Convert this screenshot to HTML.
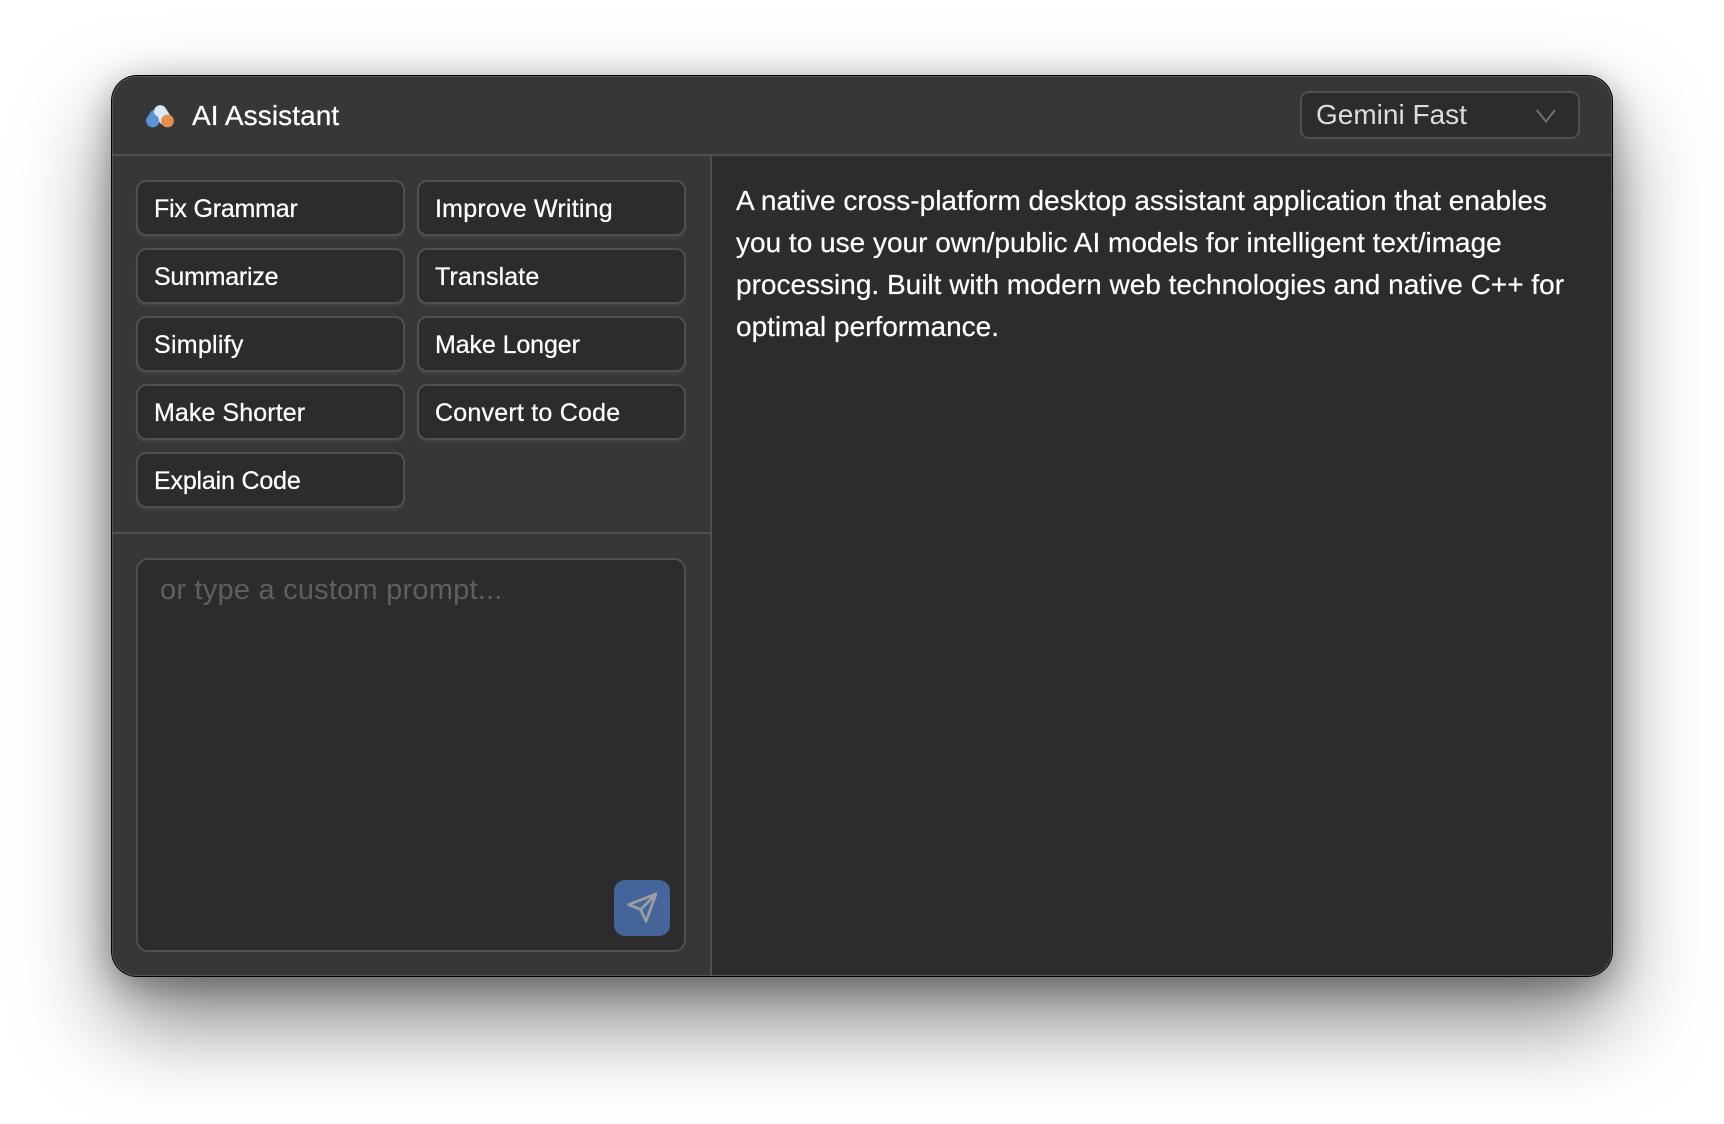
<!DOCTYPE html>
<html lang="en"><head><meta charset="utf-8"><title>AI Assistant</title>
<style>
*{box-sizing:border-box;margin:0;padding:0}
html,body{width:1724px;height:1124px;background:#fff;overflow:hidden;font-family:"Liberation Sans",sans-serif}
.win{position:absolute;left:112px;top:76px;width:1500px;height:900px;border-radius:25px;background:#373737;box-shadow:0 0 0 1px #000,inset 0 0 0 1px #565656,0 44px 90px rgba(0,0,0,.5),0 8px 34px rgba(0,0,0,.32)}
.a{position:absolute}
.hl{height:2px;background:#4f4f4f}
.vl{width:2px;background:#4f4f4f}
.btn{position:absolute;width:269px;height:56px;background:#2c2c2c;border:2px solid #505050;border-radius:10px;box-shadow:0 3px 2px rgba(70,70,70,.6);color:#fff;font-size:25px;line-height:55px;padding-left:16px;white-space:nowrap;-webkit-text-stroke:.25px #fff}
.t{position:absolute;white-space:nowrap}
</style></head><body>
<div class="win"></div>
<div class="a" style="left:712px;top:157px;width:899px;height:818px;background:#2c2c2c;border-bottom-right-radius:24px"></div>
<div class="a hl" style="left:113px;top:154px;width:1498px"></div>
<div class="a vl" style="left:710px;top:156px;height:819px"></div>
<div class="a hl" style="left:113px;top:532px;width:597px"></div>

<svg class="a" style="left:140px;top:98px" width="40" height="36" viewBox="140 98 40 36">
<line x1="152.7" y1="120.8" x2="155.8" y2="116" stroke="#5b94d3" stroke-width="13" stroke-linecap="round"/>
<line x1="160.3" y1="111.5" x2="165" y2="119" stroke="#d9e8f5" stroke-width="12.6" stroke-linecap="round"/>
<circle cx="152.7" cy="120.8" r="6.4" fill="#5b94d3"/>
<circle cx="167.5" cy="121" r="6.4" fill="#e58f4e"/>
</svg>
<div class="t" style="left:192px;top:98px;font-size:28px;line-height:36px;color:#fff;letter-spacing:.08px;-webkit-text-stroke:.25px #fff">AI Assistant</div>

<div class="a" style="left:1300px;top:91px;width:280px;height:48px;background:#2c2c2c;border:2px solid #505050;border-radius:9px"></div>
<div class="t" style="left:1316px;top:97px;font-size:28px;line-height:36px;color:#dcdcdc">Gemini Fast</div>
<svg class="a" style="left:1530px;top:100px" width="40" height="30" viewBox="1530 100 40 30"><path d="M1536.7 110L1546 121.5L1555 110" fill="none" stroke="#6f6f6f" stroke-width="2"/></svg>

<div class="btn" style="left:136px;top:180px;letter-spacing:-.2px">Fix Grammar</div>
<div class="btn" style="left:417px;top:180px;letter-spacing:.22px">Improve Writing</div>
<div class="btn" style="left:136px;top:248px;letter-spacing:-.24px">Summarize</div>
<div class="btn" style="left:417px;top:248px;letter-spacing:.12px">Translate</div>
<div class="btn" style="left:136px;top:316px;letter-spacing:.27px">Simplify</div>
<div class="btn" style="left:417px;top:316px;letter-spacing:-.1px">Make Longer</div>
<div class="btn" style="left:136px;top:384px;letter-spacing:.09px">Make Shorter</div>
<div class="btn" style="left:417px;top:384px;letter-spacing:.22px">Convert to Code</div>
<div class="btn" style="left:136px;top:452px;letter-spacing:-.18px">Explain Code</div>

<div class="a" style="left:136px;top:558px;width:550px;height:394px;background:#2c2c2c;border:2px solid #505050;border-radius:12px"></div>
<div class="t" style="left:160px;top:572px;font-size:29px;line-height:36px;color:#5f5f5f;letter-spacing:.22px">or type a custom prompt...</div>
<div class="a" style="left:614px;top:880px;width:56px;height:56px;background:#44659a;border-radius:11px"></div>
<svg class="a" style="left:620px;top:884px" width="46" height="46" viewBox="620 884 46 46"><path d="M656 894L628.5 904.7L640.7 909.5L646 921.3ZM656 894L640.7 909.5" fill="none" stroke="#9c9c9c" stroke-width="2.8" stroke-linejoin="round" stroke-linecap="round"/></svg>

<div class="t" style="left:736px;top:180px;font-size:28px;line-height:42px;color:#fff;-webkit-text-stroke:.2px #fff">A native cross-platform desktop assistant application that enables<br>you to use your own/public AI models for intelligent text/image<br>processing. Built with modern web technologies and native C++ for<br>optimal performance.</div>
</body></html>
